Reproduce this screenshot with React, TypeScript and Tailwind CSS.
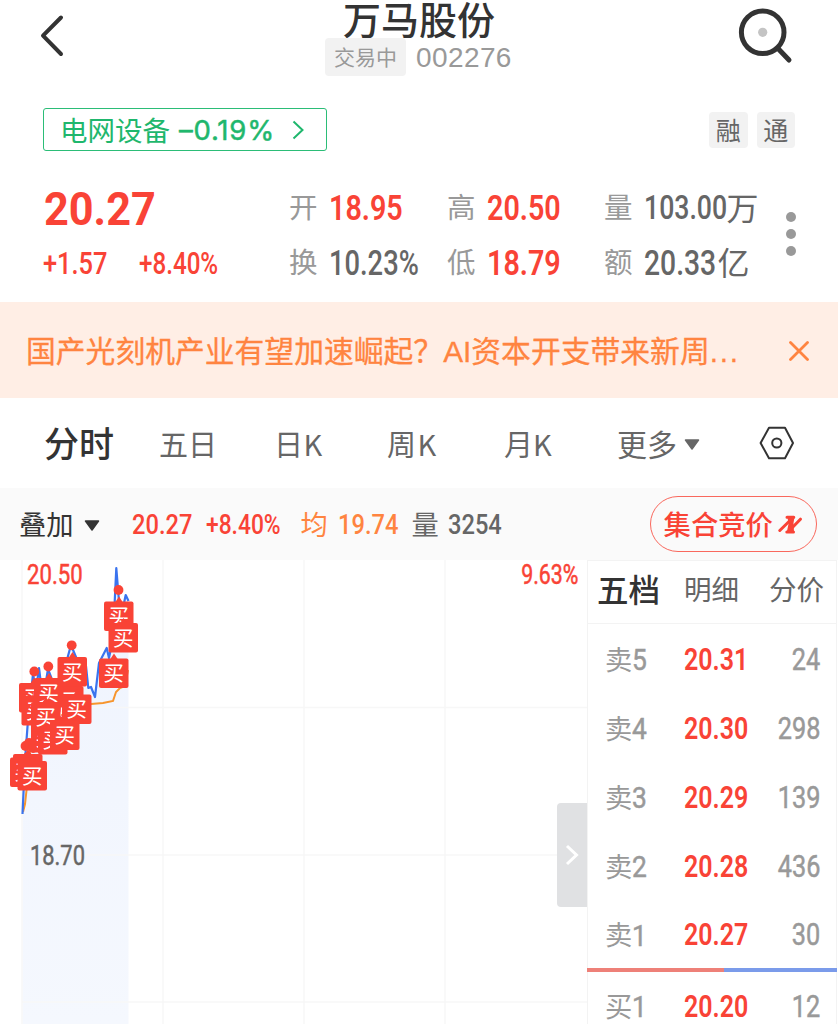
import clsx from "clsx";
import { FC, ReactNode } from "react";

const CJK = "font-['Noto_Sans_CJK_SC',sans-serif]";
const NUM = "font-['Roboto','Noto_Sans_CJK_SC',sans-serif]";

interface NumProps {
  className?: string;
  children: ReactNode;
}

// narrow figures used for every quote value
const Num: FC<NumProps> = ({ className, children }) => (
  <span
    className={clsx(
      NUM,
      "inline-block whitespace-nowrap leading-none",
      className,
    )}
  >
    {children}
  </span>
);

const Caret: FC<{ className?: string }> = ({ className }) => (
  <svg viewBox="0 0 16 11" className={clsx("h-[11px] w-4", className)}>
    <path
      d="M1.5 1h13L8 10z"
      fill="currentColor"
      stroke="currentColor"
      strokeWidth="1.5"
      strokeLinejoin="round"
    />
  </svg>
);

const Header = () => (
  <header className="flex h-[108px] items-start">
    <svg viewBox="0 0 325 72" className="h-[72px] w-[325px] shrink-0">
      <path
        d="M61 17.5L43 35.7L61 54"
        fill="none"
        stroke="#333"
        strokeWidth="4"
        strokeLinecap="round"
        strokeLinejoin="round"
      />
    </svg>
    <div className="flex w-[188px] shrink-0 flex-col items-center">
      <h1 className="h-[38px] whitespace-nowrap text-[38px] font-medium leading-[35px] text-[#333]">
        万马股份
      </h1>
      <div className="flex w-full items-center">
        <span className="flex h-[38px] w-[81px] items-center justify-center rounded bg-[#f2f2f2] pb-0.5 text-[21px] leading-none text-[#999]">
          交易中
        </span>
        <span className="ml-2.5 pt-0.5 font-['Liberation_Sans',sans-serif] text-[28px] leading-none tracking-[0.4px] text-[#999]">
          002276
        </span>
      </div>
    </div>
    <svg
      viewBox="0 0 60 60"
      className="ml-[221px] mt-[5px] h-[60px] w-[60px] shrink-0"
      fill="none"
      stroke="#333"
      strokeWidth="5"
    >
      <circle cx="28.7" cy="27.3" r="21.3" />
      <path d="M44.5 44L55 55" strokeLinecap="round" />
      <circle cx="28.7" cy="27.3" r="4.6" fill="#c4c4c4" stroke="none" />
    </svg>
  </header>
);

const SectorRow = () => (
  <div className="flex h-[43px] items-center pl-[43px] pr-11">
    <div className="flex h-[43px] w-[284px] items-center rounded-[3px] border-[1.5px] border-[#2bbd77] pl-4 text-[#1fb76d]">
      <span className="text-[27.5px] leading-none">电网设备</span>
      <span className="ml-[9px] pt-0.5 font-['Inter',sans-serif] text-[27.5px] leading-none tracking-[0.8px] [-webkit-text-stroke:0.5px]">
        –0.19%
      </span>
      <svg viewBox="0 0 12 20" className="ml-auto mr-[22px] h-5 w-3">
        <path
          d="M1.5 1.5L10.5 10L1.5 18.5"
          fill="none"
          stroke="currentColor"
          strokeWidth="2"
        />
      </svg>
    </div>
    <div className="ml-auto flex gap-[9px]">
      {["融", "通"].map((tag) => (
        <span
          key={tag}
          className="flex h-9 w-[38.5px] items-center justify-center rounded-sm bg-[#f2f2f2] pb-px text-[25px] leading-none text-[#666]"
        >
          {tag}
        </span>
      ))}
    </div>
  </div>
);

const LABEL = "shrink-0 pb-0.5 text-[28.5px] leading-none text-[#999]";

const STATS = [
  {
    width: "w-[158px]",
    rows: [
      { label: "开", value: "18.95", red: true },
      { label: "换", value: "10.23%" },
    ],
  },
  {
    width: "w-[157px]",
    rows: [
      { label: "高", value: "20.50", red: true },
      { label: "低", value: "18.79", red: true },
    ],
  },
];

const VOLUMES = [
  { label: "量", value: "103.00", unit: "万", width: "w-[83px]", size: "text-[32.5px]" },
  { label: "额", value: "20.33", unit: "亿", width: "w-[74px]", size: "text-[34.5px]" },
];

const Quote = () => (
  <section className="flex h-[151px] items-start pl-[43px] pt-[29px] text-[#f94336]">
    <div className="w-[246px] shrink-0">
      <div className="flex h-[55px] items-center pl-px pt-0.5">
        <Num className="origin-left scale-x-[0.92] text-[47px] font-bold">
          20.27
        </Num>
      </div>
      <div className="flex h-[55px] items-center pt-0.5">
        <span className="flex w-24">
          <Num className="origin-left scale-x-[0.82] text-[31px] font-medium">
            +1.57
          </Num>
        </span>
        <Num className="origin-left scale-x-[0.78] text-[31px] font-medium">
          +8.40%
        </Num>
      </div>
    </div>
    {STATS.map((col) => (
      <div key={col.rows[0].label} className={clsx("shrink-0", col.width)}>
        {col.rows.map((row) => (
          <div key={row.label} className="flex h-[55px] items-center">
            <span className={LABEL}>{row.label}</span>
            <Num
              className={clsx(
                "ml-[11px] mt-px origin-left text-[35px]",
                row.value.endsWith("%") ? "scale-x-[0.78]" : "scale-x-[0.82]",
                row.red ? "font-semibold" : "font-medium text-[#666]",
              )}
            >
              {row.value}
            </Num>
          </div>
        ))}
      </div>
    ))}
    <div className="w-[182px] shrink-0">
      {VOLUMES.map((row) => (
        <div
          key={row.label}
          className="flex h-[55px] items-center text-[#666]"
        >
          <span className={LABEL}>{row.label}</span>
          <span className={clsx("ml-[11px] mt-px flex shrink-0", row.width)}>
            <Num
              className={clsx(
                "origin-left scale-x-[0.82] font-medium",
                row.size,
              )}
            >
              {row.value}
            </Num>
          </span>
          <span className="pb-[3px] text-[32px] leading-none">{row.unit}</span>
        </div>
      ))}
    </div>
    <div className="mt-[32px] flex flex-col gap-[7px]">
      <i className="size-2.5 rounded-full bg-[#999]" />
      <i className="size-2.5 rounded-full bg-[#999]" />
      <i className="size-2.5 rounded-full bg-[#999]" />
    </div>
  </section>
);

const NewsBanner = () => (
  <div className="mr-px flex h-24 items-center bg-[#ffeee5] pl-[26px] text-[#ff8440]">
    <p className="w-[763px] whitespace-nowrap pt-[3px] font-['Liberation_Sans','Noto_Sans_CJK_SC',sans-serif] text-[29.8px] leading-none [-webkit-text-stroke:0.3px]">
      国产光刻机产业有望加速崛起？AI资本开支带来新周
      <span className="tracking-[1.8px]">...</span>
    </p>
    <svg viewBox="0 0 20 20" className="mt-0.5 size-5">
      <path
        d="M1.5 1.5L18.5 18.5M18.5 1.5L1.5 18.5"
        stroke="currentColor"
        strokeWidth="2.8"
        strokeLinecap="round"
      />
    </svg>
  </div>
);

const TABS = [
  { label: "五日", className: "w-[115px]" },
  { label: "日K", className: "w-[113px] tracking-[0.5px]" },
  { label: "周K", className: "w-[117px] tracking-[1.5px]" },
  { label: "月K", className: "w-[113px]" },
];

const PeriodTabs = () => (
  <nav className="flex h-[90px] items-center pl-11 text-[29px] leading-none text-[#666]">
    <span className="w-[115px] shrink-0 pb-[3px] text-[35px] font-medium text-[#333]">
      分时
    </span>
    {TABS.map((tab) => (
      <span key={tab.label} className={clsx("shrink-0", tab.className)}>
        {tab.label}
      </span>
    ))}
    <span className="flex w-[142px] shrink-0 items-center gap-[7px]">
      <span className="text-[30px]">更多</span>
      <Caret className="mt-0.5" />
    </span>
    <svg
      viewBox="0 0 36 34"
      className="h-[34px] w-9 shrink-0"
      fill="none"
      stroke="#333"
      strokeWidth="2"
    >
      <path
        d="M10 1.8H26L34 17L26 32.2H10L1.6 17Z"
        strokeLinejoin="round"
      />
      <circle cx="17.8" cy="17" r="4.6" />
    </svg>
  </nav>
);

const InfoStrip = () => (
  <div className="mr-px flex h-[72px] items-center bg-[#fafafa] pl-[19px] text-[27.3px] leading-none text-[#f94336]">
    <span className="text-[#333]">叠加</span>
    <Caret className="ml-2.5 mr-[32px] mt-0.5 text-[#333]" />
    <span className="flex w-[74px] shrink-0 pt-0.5">
      <Num className="origin-left scale-x-[0.83] text-[28.5px] font-medium">
        20.27
      </Num>
    </span>
    <span className="flex w-[95px] shrink-0 pt-0.5">
      <Num className="origin-left scale-x-[0.8] text-[28.5px] font-medium">
        +8.40%
      </Num>
    </span>
    <span className="w-[37px] shrink-0 text-[#ff8440]">均</span>
    <span className="flex w-[74px] shrink-0 pt-0.5 text-[#ff8440]">
      <Num className="origin-left scale-x-[0.83] text-[28.5px] font-medium">
        19.74
      </Num>
    </span>
    <span className="w-[36px] shrink-0 text-[#666]">量</span>
    <span className="flex w-[202px] shrink-0 pt-0.5 text-[#666]">
      <Num className="origin-left scale-x-[0.83] text-[28.5px] font-medium">
        3254
      </Num>
    </span>
    <button className="flex h-14 w-[167px] shrink-0 items-center rounded-full border border-[#f94336]/80 pl-[13px] text-[27.3px] font-medium leading-none">
      <span>集合竞价</span>
      <svg
        viewBox="0 0 24 19"
        className="ml-[5px] h-[19px] w-6 shrink-0"
        fill="currentColor"
        stroke="currentColor"
        strokeLinecap="round"
      >
        <path
          d="M1.8 15.5L12 5.5M22.4 4.2L12.5 14.5M9 2.2H15.8M8.8 17H15.5"
          fill="none"
          strokeWidth="3"
        />
        <path d="M9.5 2H16.5L15.5 8L16 17H8.8L10.5 9Z" stroke="none" />
      </svg>
    </button>
  </div>
);

// top-left corner of every buy flag, in drawing order
const FLAGS = [
  [54, 126],
  [19, 123],
  [21.5, 136],
  [31, 163],
  [38, 165],
  [46, 136],
  [34, 118],
  [31, 142],
  [57.5, 97],
  [62, 134.5],
  [50, 160.5],
  [13, 194],
  [10, 197.5],
  [17.5, 201],
  [104, 41.5],
  [108.5, 63],
  [99, 98.5],
];

const DOTS = [
  [34.3, 111.5],
  [48.3, 106.5],
  [71.7, 85.3],
  [118.5, 30],
  [25.5, 186],
  [29, 183],
  [33, 188],
];

const PRICE =
  "22.5,254 25,200 28,160 33,114 36,130 39,108 43,140 48,109 54,125 62,118 71,85 78,102 86,106 88.3,128 91,127 95,137 99,103 106.7,88 109,98 113,78 116.3,8 119.3,45 123,48 125.7,35 128.5,41";

const Chart = () => (
  <svg
    viewBox="0 0 587 464"
    className="h-[464px] w-[587px] shrink-0 font-['Noto_Sans_CJK_SC',sans-serif]"
  >
    <defs>
      <linearGradient id="area" x1="0" y1="0" x2="0" y2="1">
        <stop offset="0" stopColor="#eff4fe" />
        <stop offset="1" stopColor="#f5f8fe" />
      </linearGradient>
    </defs>
    <polygon
      points={`22.5,464 ${PRICE} 128.5,464`}
      fill="url(#area)"
    />
    <path
      d="M22 0V464M163 0V464M304 0V464M445 0V464M22 147.5H587M22 295H587M22 442H587"
      stroke="#f7f7f7"
      strokeWidth="1.5"
    />
    <polyline
      points="23,252 25,244 27,226 30,190 40,160 60,146 91,144 103,143 113,141 116,132 120,128 125,126 128,110"
      fill="none"
      stroke="#f7952c"
      strokeWidth="2"
    />
    <polyline
      points={PRICE}
      fill="none"
      stroke="#3a73ee"
      strokeWidth="2.2"
      strokeLinejoin="round"
    />
    {DOTS.map(([x, y]) => (
      <circle key={`${x}-${y}`} cx={x} cy={y} r="4.9" fill="#f94336" />
    ))}
    {FLAGS.map(([x, y]) => (
      <g key={`${x}-${y}`} transform={`translate(${x} ${y})`}>
        <path d="M11 1L15 -5L19 1Z" fill="#f94336" />
        <rect width="29.5" height="29.5" rx="2" fill="#f94336" />
        <text x="14.7" y="22.5" textAnchor="middle" fontSize="20.5" fill="#fff">
          买
        </text>
      </g>
    ))}
  </svg>
);

const AXIS = "absolute text-[27px] leading-[27px] [-webkit-text-stroke:0.5px]";

const ChartPanel = () => (
  <div className="relative w-[587px] shrink-0">
    <Chart />
    <Num
      className={clsx(
        AXIS,
        "left-[27px] top-0.5 origin-left scale-x-[0.82] text-[#f94336]",
      )}
    >
      20.50
    </Num>
    <Num
      className={clsx(
        AXIS,
        "right-[9px] top-0.5 origin-right scale-x-[0.79] text-[#f94336]",
      )}
    >
      9.63%
    </Num>
    <Num
      className={clsx(
        AXIS,
        "left-[30px] top-[283px] origin-left scale-x-[0.81] text-[#666]",
      )}
    >
      18.70
    </Num>
    <button className="absolute right-0 top-[243px] flex h-[104px] w-[30px] items-center justify-center rounded-l bg-[#e0e1e3]">
      <svg viewBox="0 0 14 22" className="h-[22px] w-3.5">
        <path
          d="M2 2L11.5 11L2 20"
          fill="none"
          stroke="#fff"
          strokeWidth="3"
        />
      </svg>
    </button>
  </div>
);

const ASKS = [
  { label: "卖", level: 5, price: "20.31", volume: 24 },
  { label: "卖", level: 4, price: "20.30", volume: 298 },
  { label: "卖", level: 3, price: "20.29", volume: 139 },
  { label: "卖", level: 2, price: "20.28", volume: 436 },
  { label: "卖", level: 1, price: "20.27", volume: 30 },
];

const BIDS = [{ label: "买", level: 1, price: "20.20", volume: 12 }];

const OrderRow: FC<(typeof ASKS)[number]> = ({
  label,
  level,
  price,
  volume,
}) => (
  <div className="flex h-[68.8px] shrink-0 items-center pl-[17px] pr-4 pt-0.5">
    <span className="flex w-[79px] shrink-0 items-center text-[#999]">
      <span className="pb-[3px] text-[27.3px] leading-none">{label}</span>
      <Num className="origin-left scale-x-[0.88] text-[30px] [-webkit-text-stroke:0.5px]">
        {level}
      </Num>
    </span>
    <Num className="origin-left scale-x-[0.82] text-[30.5px] font-semibold text-[#f94336]">
      {price}
    </Num>
    <Num className="ml-auto origin-right scale-x-[0.83] text-[30.5px] text-[#999] [-webkit-text-stroke:0.5px]">
      {volume}
    </Num>
  </div>
);

const OrderBook = () => (
  <aside className="w-[250px] shrink-0 border-x-[1.5px] border-[#f3f3f3]">
    <div className="flex h-16 items-center border-b-[1.5px] border-t border-[#f3f3f3] pb-[7px] pl-[9px] text-[27.5px] leading-none text-[#666]">
      <span className="w-[87px] shrink-0 text-[31.5px] font-medium text-[#333]">
        五档
      </span>
      <span className="w-[85px] shrink-0">明细</span>
      <span className="shrink-0">分价</span>
    </div>
    <div className="pt-px">
      {ASKS.map((row) => (
        <OrderRow key={row.level} {...row} />
      ))}
    </div>
    <div className="-mx-px -mt-px flex h-1">
      <i className="w-[137px] bg-[#ee8078]" />
      <i className="flex-1 bg-[#7b9bea]" />
    </div>
    {BIDS.map((row) => (
      <OrderRow key={row.level} {...row} />
    ))}
  </aside>
);

export default function App() {
  return (
    <main
      className={clsx(
        CJK,
        "h-[1024px] w-[839px] overflow-hidden bg-white text-[#333]",
      )}
    >
      <Header />
      <SectorRow />
      <Quote />
      <NewsBanner />
      <PeriodTabs />
      <InfoStrip />
      <section className="flex h-[464px] overflow-hidden">
        <ChartPanel />
        <OrderBook />
      </section>
    </main>
  );
}
